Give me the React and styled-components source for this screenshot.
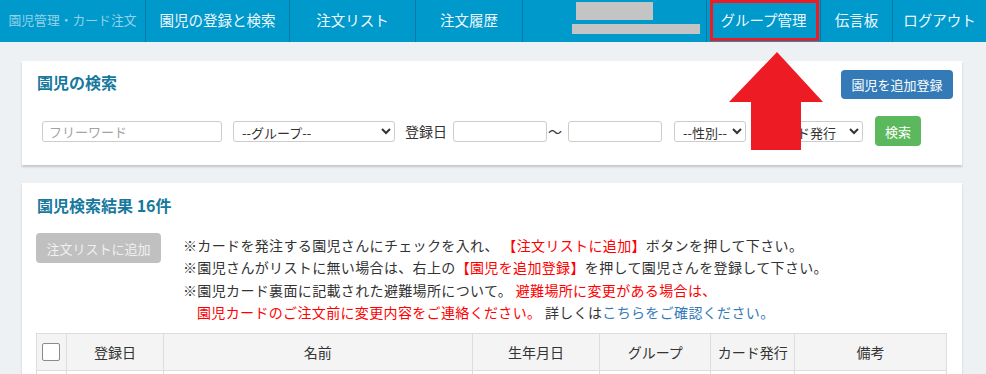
import styled, { createGlobalStyle } from 'styled-components';

const GlobalStyle = createGlobalStyle`
  html, body {
    margin: 0;
    padding: 0;
    background: #edf1f4;
    font-family: "Noto Sans CJK JP", "Noto Sans", sans-serif;
    color: #333;
  }
`;

const Page = styled.div`
  position: relative;
  width: 986px;
  height: 374px;
  overflow: hidden;
`;

const NavBar = styled.nav`
  display: flex;
  height: 42px;
  background: #0099cc;
`;

const NavItem = styled.div`
  position: relative;
  display: flex;
  align-items: center;
  justify-content: center;
  box-sizing: border-box;
  width: ${(p) => p.$w}px;
  padding-bottom: 3px;
  border-left: ${(p) => (p.$first ? 'none' : '1px solid #0a78a3')};
  color: ${(p) => (p.$brand ? '#94d2e8' : '#eef8fc')};
  font-size: ${(p) => (p.$brand ? '12.8px' : '14.5px')};
  white-space: nowrap;

  ${(p) =>
    p.$marked &&
    `
    &::after {
      content: '';
      position: absolute;
      left: 3px;
      right: 1px;
      top: 0;
      bottom: 1px;
      border: 3px solid #ed1c24;
    }
  `}
`;

const UserBlock = styled.div`
  display: flex;
  flex-direction: column;
  align-items: flex-start;
  gap: 4px;
  box-sizing: border-box;
  width: 184px;
  padding: 2px 0 0 49px;
  border-left: 1px solid #0a78a3;
`;

const Redacted = styled.div`
  width: ${(p) => p.$w}px;
  height: ${(p) => p.$h}px;
  margin-left: ${(p) => p.$ml || 0}px;
  background: #c4c4c4;
`;

const Content = styled.main`
  display: flex;
  flex-direction: column;
  gap: 18px;
  padding: 19px 24px 0 22px;
`;

const Panel = styled.section`
  background: #fff;
  box-shadow: 0 2px 2px rgba(0, 0, 0, 0.18);
  padding: ${(p) => p.$pad};
`;

const PanelHeader = styled.div`
  display: flex;
  justify-content: space-between;
  align-items: flex-start;
`;

const Title = styled.h2`
  margin: ${(p) => p.$mt || 0}px 0 0 ${(p) => p.$ml || 0}px;
  font-size: 16px;
  line-height: 20px;
  font-weight: bold;
  color: #17789d;
`;

const Button = styled.button`
  height: ${(p) => p.$h || 30}px;
  margin-left: ${(p) => p.$ml || 0}px;
  padding: 0 ${(p) => p.$px || 12}px;
  border: none;
  border-radius: 4px;
  background: ${(p) => p.$bg};
  color: ${(p) => p.$color || '#fff'};
  font-family: inherit;
  font-size: 13px;
  white-space: nowrap;
  cursor: pointer;
  flex-shrink: 0;
`;

const FilterRow = styled.div`
  display: flex;
  align-items: center;
  height: 30px;
  margin-top: 17px;
  padding-left: 5px;
`;

const TextInput = styled.input`
  box-sizing: border-box;
  width: ${(p) => p.$w}px;
  height: 21px;
  margin-left: ${(p) => p.$ml || 0}px;
  padding: 0 6px;
  border: 1px solid #ccc;
  border-radius: 3px;
  font-family: inherit;
  font-size: 13px;

  &::placeholder {
    color: #a3a3a3;
  }
`;

const Select = styled.select`
  box-sizing: border-box;
  width: ${(p) => p.$w}px;
  height: 21px;
  margin-left: ${(p) => p.$ml || 0}px;
  padding: 0 2px 0 4px;
  border: 1px solid #ccc;
  border-radius: 3px;
  background: #fff;
  color: #333;
  font-family: inherit;
  font-size: 13px;
`;

const Label = styled.span`
  margin-left: ${(p) => p.$ml || 0}px;
  font-size: 14px;
  color: #333;
`;

const ActionArea = styled.div`
  display: flex;
  gap: 22px;
  margin-top: 18px;
`;

const Notes = styled.div`
  margin-top: 1px;
  font-size: 14px;
  line-height: 22.3px;
  letter-spacing: 0.35px;
  color: #333;
  white-space: nowrap;
`;

const NoteLine = styled.div`
  padding-left: ${(p) => (p.$indent ? '14px' : '0')};
`;

const Red = styled.span`
  color: #ff0000;
`;

const Link = styled.a`
  color: #337ab7;
  text-decoration: none;
`;

const Table = styled.table`
  margin-top: 10px;
  border-collapse: collapse;
  table-layout: fixed;
`;

const Th = styled.th`
  width: ${(p) => p.$w}px;
  height: 36px;
  padding: 0;
  border: 1px solid #ddd;
  background: #f4f4f4;
  font-size: 14px;
  font-weight: normal;
  color: #333;
  text-align: center;
`;

const Row = styled.tr`
  height: 36px;
`;

const Td = styled.td`
  border: 1px solid #ddd;
`;

const CheckBox = styled.input`
  appearance: none;
  display: block;
  width: 18px;
  height: 18px;
  margin: 0 auto;
  border: 1px solid #8a8a8a;
  border-radius: 2px;
  background: #fff;
`;

const ArrowMark = styled.svg`
  position: absolute;
  left: 729px;
  top: 52px;
`;

const navItems = [
  { label: '園児の登録と検索', w: 144 },
  { label: '注文リスト', w: 126 },
  { label: '注文履歴', w: 107 },
];

const navRight = [
  { label: 'グループ管理', w: 114, marked: true },
  { label: '伝言板', w: 72 },
  { label: 'ログアウト', w: 94 },
];

const columns = [
  { label: '登録日', w: 97 },
  { label: '名前', w: 309 },
  { label: '生年月日', w: 128 },
  { label: 'グループ', w: 111 },
  { label: 'カード発行', w: 84 },
  { label: '備考', w: 152 },
];

const App = () => {
  return (
    <Page>
      <GlobalStyle />
      <NavBar>
        <NavItem $w={145} $first $brand>
          園児管理・カード注文
        </NavItem>
        {navItems.map((item) => (
          <NavItem key={item.label} $w={item.w}>
            {item.label}
          </NavItem>
        ))}
        <UserBlock>
          <Redacted $w={77} $h={18} $ml={4} />
          <Redacted $w={128} $h={10} />
        </UserBlock>
        {navRight.map((item) => (
          <NavItem key={item.label} $w={item.w} $marked={item.marked}>
            {item.label}
          </NavItem>
        ))}
      </NavBar>

      <Content>
        <Panel $pad="9px 9px 19px 15px">
          <PanelHeader>
            <Title $mt={2}>園児の検索</Title>
            <Button $h={29} $bg="#337ab7" $px={10.5}>
              園児を追加登録
            </Button>
          </PanelHeader>
          <FilterRow>
            <TextInput $w={180} placeholder="フリーワード" />
            <Select $w={162} $ml={11}>
              <option>--グループ--</option>
            </Select>
            <Label $ml={10}>登録日</Label>
            <TextInput $w={94} $ml={6} />
            <Label $ml={1}>〜</Label>
            <TextInput $w={94} $ml={6} />
            <Select $w={72} $ml={12}>
              <option>--性別--</option>
            </Select>
            <Select $w={110} $ml={7}>
              <option>--カード発行</option>
            </Select>
            <Button $h={30} $bg="#5cb85c" $px={10} $ml={12}>
              検索
            </Button>
          </FilterRow>
        </Panel>

        <Panel $pad="12px 15px 0 14px">
          <Title $ml={1}>園児検索結果 16件</Title>
          <ActionArea>
            <Button $h={30} $bg="#c0c0c0" $color="#f0f0f0" $px={10.5}>
              注文リストに追加
            </Button>
            <Notes>
              <NoteLine>
                ※カードを発注する園児さんにチェックを入れ、 <Red>【注文リストに追加】</Red>ボタンを押して下さい。
              </NoteLine>
              <NoteLine>
                ※園児さんがリストに無い場合は、右上の<Red>【園児を追加登録】</Red>を押して園児さんを登録して下さい。
              </NoteLine>
              <NoteLine>
                ※園児カード裏面に記載された避難場所について。 <Red>避難場所に変更がある場合は、</Red>
              </NoteLine>
              <NoteLine $indent>
                <Red>園児カードのご注文前に変更内容をご連絡ください。</Red> 詳しくは
                <Link href="#">こちらをご確認ください。</Link>
              </NoteLine>
            </Notes>
          </ActionArea>
          <Table>
            <thead>
              <tr>
                <Th $w={29}>
                  <CheckBox type="checkbox" />
                </Th>
                {columns.map((c) => (
                  <Th key={c.label} $w={c.w - 1}>
                    {c.label}
                  </Th>
                ))}
              </tr>
            </thead>
            <tbody>
              <Row>
                <Td />
                {columns.map((c) => (
                  <Td key={c.label} />
                ))}
              </Row>
            </tbody>
          </Table>
        </Panel>
      </Content>

      <ArrowMark width="94" height="98" viewBox="0 0 94 98">
        <polygon points="48,0 94,50 72,50 72,98 22,98 22,50 0,50" fill="#ed1c24" />
      </ArrowMark>
    </Page>
  );
};

export default App;
